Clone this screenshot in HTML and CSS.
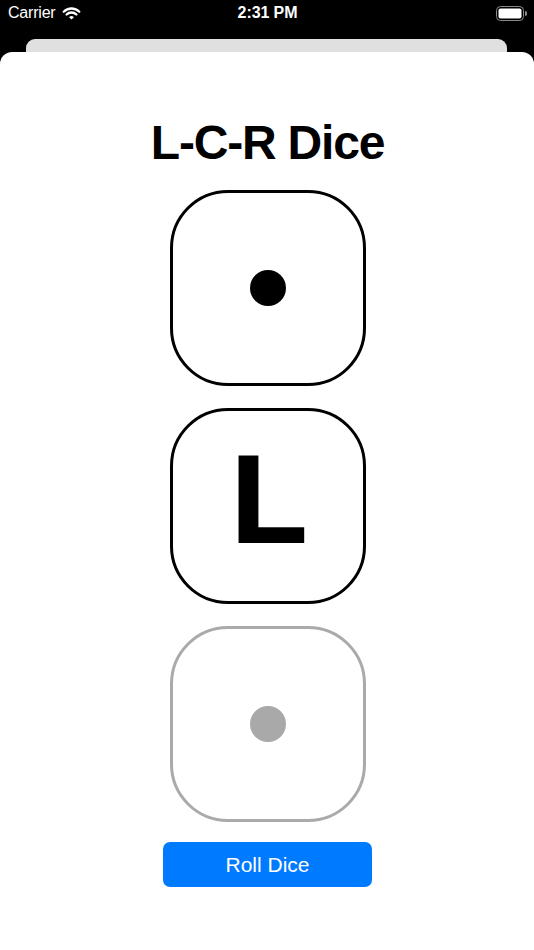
FILE: index.html
```html
<!DOCTYPE html>
<html lang="en">
<head>
<meta charset="utf-8">
<title>L-C-R Dice</title>
<link rel="stylesheet" href="styles.css">
</head>
<body>
<div class="status">
  <div class="status-left">
    <span class="carrier">Carrier</span>
    <svg class="wifi" width="19" height="13" viewBox="0 0 19 13">
      <path d="M1.72 4.72 A11 11 0 0 1 17.28 4.72" fill="none" stroke="#fff" stroke-width="2.3" stroke-linecap="round"/>
      <path d="M4.55 7.55 A7 7 0 0 1 14.45 7.55" fill="none" stroke="#fff" stroke-width="2.3" stroke-linecap="round"/>
      <path d="M9.5 12.6 L7.1 10.2 A3.4 3.4 0 0 1 11.9 10.2 Z" fill="#fff"/>
    </svg>
  </div>
  <div class="time">2:31 PM</div>
  <div class="status-right">
    <svg class="battery" width="31" height="15" viewBox="0 0 31 15">
      <rect x="0.5" y="0.5" width="27" height="14" rx="4" fill="none" stroke="#8a8a8a" stroke-width="1"/>
      <rect x="2.5" y="2.5" width="23" height="10" rx="2" fill="#fff"/>
      <path d="M29 5 A2.2 2.5 0 0 1 29 10 Z" fill="#8a8a8a"/>
    </svg>
  </div>
</div>
<div class="back-card"></div>
<main class="sheet">
  <h1 class="title">L-C-R Dice</h1>
  <div class="die">
    <span class="pip"></span>
  </div>
  <div class="die die-letter">
    <span class="letter">L</span>
  </div>
  <div class="die die-muted">
    <span class="pip"></span>
  </div>
  <button class="roll" type="button">Roll Dice</button>
</main>
</body>
</html>
```
FILE: styles.css
```css
html, body {
  margin: 0;
  padding: 0;
}

body {
  width: 534px;
  height: 950px;
  overflow: hidden;
  background: #000;
  font-family: "Liberation Sans", Arial, sans-serif;
  display: flex;
  flex-direction: column;
}

.status {
  height: 39px;
  box-sizing: border-box;
  padding: 5px 7px 0 8px;
  display: grid;
  grid-template-columns: 1fr auto 1fr;
  align-items: start;
  color: #fff;
}

.status-left {
  display: flex;
  align-items: center;
  gap: 6px;
}

.carrier {
  font-size: 16px;
  line-height: 16px;
  letter-spacing: -0.2px;
}

.wifi {
  display: block;
  margin-top: 1px;
}

.time {
  font-size: 16px;
  line-height: 16px;
  font-weight: 600;
  letter-spacing: -0.1px;
}

.status-right {
  display: flex;
  justify-content: flex-end;
}

.battery {
  display: block;
  margin-top: 1px;
}

.back-card {
  height: 13px;
  margin: 0 27px 0 26px;
  background: #e0e0e0;
  border-radius: 9px 9px 0 0;
}

.sheet {
  flex: 1;
  background: #fff;
  border-radius: 12px 12px 0 0;
  display: flex;
  flex-direction: column;
  align-items: center;
  padding-top: 67px;
  padding-left: 1px;
}

.title {
  margin: 0 0 23px;
  font-size: 48px;
  line-height: 48px;
  font-weight: 700;
  letter-spacing: -1.2px;
  color: #000;
}

.die {
  width: 196px;
  height: 196px;
  box-sizing: border-box;
  border: 3px solid #000;
  border-radius: 58px;
  display: flex;
  align-items: center;
  justify-content: center;
  margin-bottom: 22px;
}

.die-muted {
  border-color: #aaaaaa;
  margin-bottom: 20px;
}

.pip {
  width: 36px;
  height: 36px;
  border-radius: 50%;
  background: #000;
}

.die-muted .pip {
  background: #a9a9a9;
}

.letter {
  font-size: 124px;
  line-height: 124px;
  font-weight: 700;
  color: #000;
  -webkit-text-stroke: 2px #000;
  margin-bottom: 14px;
  margin-left: 3px;
}

.roll {
  width: 209px;
  height: 45px;
  border: none;
  border-radius: 7px;
  background: #007aff;
  color: #fff;
  font-family: "Liberation Sans", Arial, sans-serif;
  font-size: 21px;
  padding: 0;
}
```
